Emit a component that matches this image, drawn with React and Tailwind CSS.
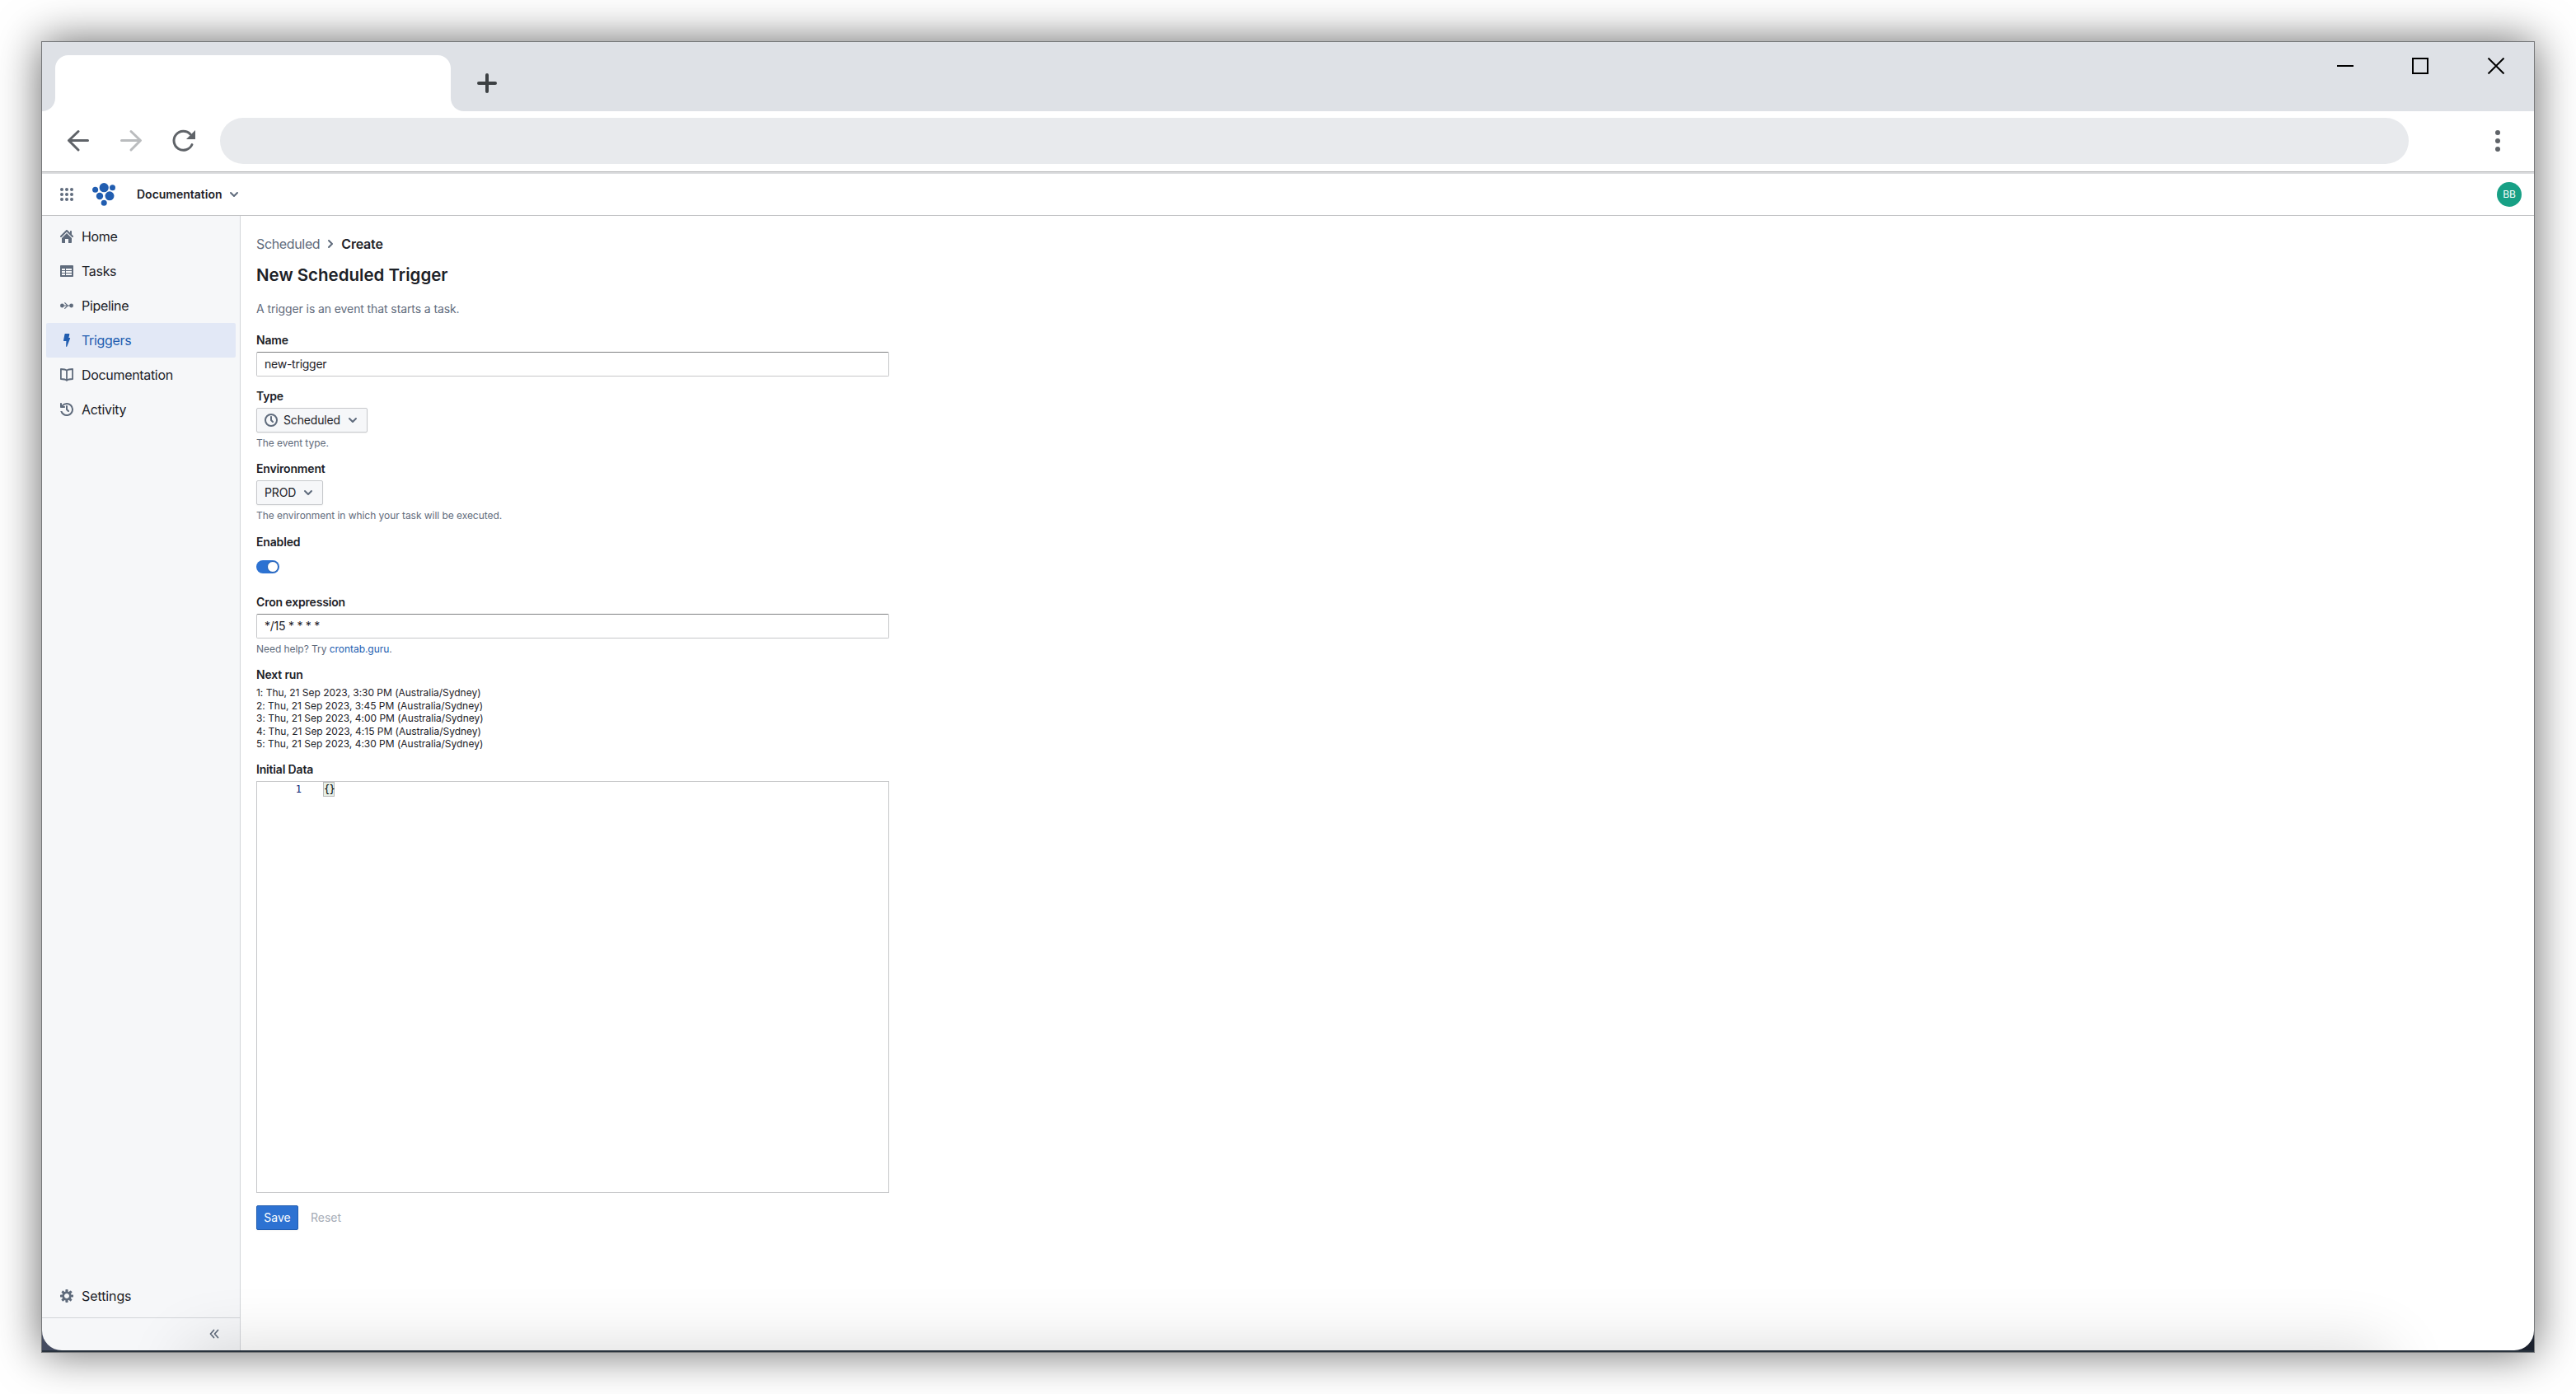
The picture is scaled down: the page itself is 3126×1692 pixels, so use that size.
import React, { useState } from "react";

const menuItems = [
  { id: "home", label: "Home" },
  { id: "tasks", label: "Tasks" },
  { id: "pipeline", label: "Pipeline" },
  { id: "triggers", label: "Triggers" },
  { id: "documentation", label: "Documentation" },
  { id: "activity", label: "Activity" },
];

const nextRuns = [
  "1: Thu, 21 Sep 2023, 3:30 PM (Australia/Sydney)",
  "2: Thu, 21 Sep 2023, 3:45 PM (Australia/Sydney)",
  "3: Thu, 21 Sep 2023, 4:00 PM (Australia/Sydney)",
  "4: Thu, 21 Sep 2023, 4:15 PM (Australia/Sydney)",
  "5: Thu, 21 Sep 2023, 4:30 PM (Australia/Sydney)",
];

const iconPaths = {
  home: "M2 10v5c0 .55.45 1 1 1h3v-5h4v5h3c.55 0 1-.45 1-1v-5L8 4l-6 6zm13.71-2.71L14 5.59V2c0-.55-.45-1-1-1s-1 .45-1 1v1.59L8.71.29C8.53.11 8.28 0 8 0s-.53.11-.71.29l-7 7a1.003 1.003 0 001.42 1.42L8 2.41l6.29 6.29c.18.18.43.3.71.3a1.003 1.003 0 00.71-1.71z",
  tasks:
    "M15 1H1c-.6 0-1 .5-1 1v12c0 .6.4 1 1 1h14c.6 0 1-.4 1-1V2c0-.5-.4-1-1-1zM6 13H2v-2h4v2zm0-3H2V8h4v2zm0-3H2V5h4v2zm8 6H7v-2h7v2zm0-3H7V8h7v2zm0-3H7V5h7v2z",
  triggers: "M6.2 0h4.6c.4 0 .6.3.5.7L10.4 5H11.6c.4 0 .6.3.5.7L8.3 15.5C8 16.2 7.1 16.1 7.1 15.3L7.4 9H4.5c-.4 0-.6-.3-.5-.7L5.5.6C5.6.2 5.8 0 6.2 0z",
  activity:
    "M8 3c-.55 0-1 .45-1 1v4c0 .28.11.53.29.71l2 2a1.003 1.003 0 001.42-1.42L9 7.59V4c0-.55-.45-1-1-1zm0-3a7.95 7.95 0 00-6 2.74V1c0-.55-.45-1-1-1s-1 .45-1 1v4c0 .55.45 1 1 1h4c.55 0 1-.45 1-1s-.45-1-1-1H3.54C4.64 2.78 6.23 2 8 2c3.31 0 6 2.69 6 6 0 3.31-2.69 6-6 6-2.61 0-4.83-1.67-5.65-4H.26A8 8 0 108 0z",
  settings:
    "M15.19 6.39h-1.85c-.11-.37-.27-.71-.45-1.04l1.36-1.36c.31-.31.31-.82 0-1.13l-1.13-1.13a.803.803 0 00-1.13 0l-1.36 1.36c-.33-.17-.67-.33-1.04-.44V.79c0-.44-.36-.8-.8-.8h-1.6c-.44 0-.8.36-.8.8v1.86c-.39.12-.75.28-1.1.47l-1.3-1.3c-.3-.3-.79-.3-1.09 0L1.82 2.91c-.3.3-.3.79 0 1.09l1.3 1.3c-.2.34-.36.7-.48 1.09H.79c-.44 0-.8.36-.8.8v1.6c0 .44.36.8.8.8h1.85c.11.37.27.71.45 1.04l-1.36 1.36c-.31.31-.31.82 0 1.13l1.13 1.13c.31.31.82.31 1.13 0l1.36-1.36c.33.18.67.33 1.04.44v1.86c0 .44.36.8.8.8h1.6c.44 0 .8-.36.8-.8v-1.86c.39-.12.75-.28 1.1-.47l1.3 1.3c.3.3.79.3 1.09 0l1.09-1.09c.3-.3.3-.79 0-1.09l-1.3-1.3c.19-.35.36-.71.48-1.1h1.85c.44 0 .8-.36.8-.8v-1.6a.816.816 0 00-.81-.79zm-7.2 4.6c-1.66 0-3-1.34-3-3s1.34-3 3-3 3 1.34 3 3-1.34 3-3 3z",
  time: "M8 0a8 8 0 100 16A8 8 0 008 0zm0 14A6 6 0 118 2a6 6 0 010 12zM9 7.59V4c0-.55-.45-1-1-1s-1 .45-1 1v4c0 .28.11.53.29.71l2 2a1.003 1.003 0 001.42-1.42L9 7.59z",
  chevronDown:
    "M12 5c-.28 0-.53.11-.71.29L8 8.59l-3.29-3.3a1.003 1.003 0 00-1.42 1.42l4 4c.18.18.43.29.71.29s.53-.11.71-.29l4-4A1.003 1.003 0 0012 5z",
  chevronRight:
    "M10.71 7.29l-4-4a1.003 1.003 0 00-1.42 1.42L8.59 8 5.3 11.29a1.003 1.003 0 001.42 1.42l4-4c.17-.18.28-.43.28-.71s-.11-.53-.29-.71z",
};

const Icon = ({ name, className = "" }) => {
  if (name === "pipeline") {
    return (
      <svg viewBox="0 0 16 16" className={`size-4 shrink-0 ${className}`} fill="none" stroke="currentColor" strokeWidth="1.2" strokeLinecap="round">
        <circle cx="2.4" cy="8" r="2.4" fill="currentColor" stroke="none" />
        <circle cx="13.6" cy="8" r="2.4" fill="currentColor" stroke="none" />
        <path d="M4 8h8M5.7 4.6L9.2 8L5.7 11.4" />
      </svg>
    );
  }
  if (name === "documentation") {
    return (
      <svg viewBox="0 0 16 16" className={`size-4 shrink-0 ${className}`} fill="none" stroke="currentColor" strokeWidth="1.8" strokeLinejoin="round">
        <path d="M8 2.8C6.5 1.2 4 1 .9 1v12c3.1 0 5.6.2 7.1 1.8C9.5 13.2 12 13 15.1 13V1C12 1 9.5 1.2 8 2.8zM8 2.8v12" />
      </svg>
    );
  }
  return (
    <svg viewBox="0 0 16 16" className={`size-4 shrink-0 ${className}`} fill="currentColor" fillRule="evenodd">
      <path d={iconPaths[name]} />
    </svg>
  );
};

const TabStrip = () => (
  <div className="flex h-[84px] shrink-0 justify-between bg-[#dee1e6]">
    <div className="flex items-end">
      {/* the tab and the curves at its foot */}
      <svg width="512" height="68" viewBox="0 0 512 68" fill="#fff">
        <path d="M0 68C9 68 16 61 16 52V16C16 7 23 0 32 0H480C489 0 496 7 496 16V52C496 61 503 68 512 68z" />
      </svg>
      <svg width="24" height="24" viewBox="0 0 24 24" className="mb-[22px] ml-4" stroke="#3c4043" strokeWidth="4" strokeLinecap="round">
        <path d="M12 2v20M2 12h20" />
      </svg>
    </div>
    <svg width="204" height="20" viewBox="0 0 204 20" className="mt-[19px] mr-9" fill="none" stroke="#000" strokeWidth="2">
      <path d="M1 10h20M93 1h18v18H93zM184.5.5l19 19M203.5.5l-19 19" />
    </svg>
  </div>
);

const Toolbar = () => (
  <div className="flex h-[73px] shrink-0 items-center bg-white pr-[41px] pb-px pl-[31px]">
    <svg width="156" height="28" viewBox="0 0 156 28" fill="none" strokeWidth="3" strokeLinecap="round" strokeLinejoin="round">
      <path d="M24.5 13.5H2M13 2.5L1.5 13.5L13 25" stroke="#5f6368" />
      <path d="M65.5 13.5H88M77 2.5L88.5 13.5L77 25" stroke="#babcbe" />
      <path d="M151 18.5A11.5 11.5 0 1 1 149 6" stroke="#5f6368" />
      <path d="M155 1v11h-11z" fill="#5f6368" />
    </svg>
    <div className="ml-[29px] h-14 flex-1 rounded-full bg-[#e8eaed]"></div>
    <div className="ml-[105px] flex flex-col gap-1">
      <span className="size-1.5 rounded-full bg-[#5f6368]"></span>
      <span className="size-1.5 rounded-full bg-[#5f6368]"></span>
      <span className="size-1.5 rounded-full bg-[#5f6368]"></span>
    </div>
  </div>
);

const Logo = () => (
  <svg width="28" height="28" viewBox="0 0 28 28" fill="#215db0">
    <circle cx="14.2" cy="5.7" r="5.6" />
    <circle cx="3.6" cy="8.2" r="3.5" />
    <circle cx="24.5" cy="5.7" r="3.5" />
    <circle cx="9" cy="16" r="4.2" />
    <circle cx="21" cy="15.8" r="5.5" />
    <circle cx="14.2" cy="24.3" r="3.5" />
  </svg>
);

const Header = () => (
  <header className="flex h-[51px] shrink-0 items-center border-b border-[#c0c1c3] bg-white pr-[15px] pl-[22px]">
    <div className="grid grid-cols-3 gap-0.5">
      {Array.from({ length: 9 }).map((_, i) => (
        <span key={i} className="size-1 rounded-full bg-[#5f6b7c]"></span>
      ))}
    </div>
    <div className="ml-[23px]">
      <Logo />
    </div>
    <span className="ml-[26px] text-sm font-semibold">Documentation</span>
    <Icon name="chevronDown" className="ml-1.5 text-[#5f6b7c]" />
    <span className="ml-auto flex size-[30px] items-center justify-center rounded-full bg-[#17a085] text-xs text-white">
      BB
    </span>
  </header>
);

const Sidebar = ({ active, onSelect }) => (
  <aside className="flex w-[241px] shrink-0 flex-col border-r border-[#d3d5d9] bg-[#f6f7f9]">
    <nav className="flex-1 px-[5px] pt-1">
      {menuItems.map((item) => (
        <button
          key={item.id}
          onClick={() => onSelect(item.id)}
          className={`flex h-[42px] w-[230px] items-center gap-2.5 rounded-xs pl-[17px] text-base tracking-[-0.32px] ${
            active === item.id ? "bg-[#e2e8f6] text-[#215db0]" : "text-[#1c2127]"
          }`}
        >
          <Icon name={item.id} className={active === item.id ? "text-[#215db0]" : "text-[#5f6b7c]"} />
          {item.label}
        </button>
      ))}
    </nav>
    <button className="mb-[5px] flex h-[42px] items-center gap-2.5 pl-[22px] text-base tracking-[-0.1px]">
      <Icon name="settings" className="text-[#5f6b7c]" />
      Settings
    </button>
    <div className="flex h-10 items-center justify-end border-t border-[#d3d5d9] pr-[25px] pb-px">
      <svg width="12" height="12" viewBox="0 0 12 12" fill="none" stroke="#5f6b7c" strokeWidth="1.7" strokeLinecap="round" strokeLinejoin="round">
        <path d="M5.5 1.5L1.5 6L5.5 10.5M10.5 1.5L6.5 6L10.5 10.5" />
      </svg>
    </div>
  </aside>
);

const Field = ({ label, help, className = "", children }) => (
  <div className={`flex flex-col items-start ${className}`}>
    <label className="mb-[5px] h-[18px] text-sm leading-[18px] font-semibold tracking-[-0.17px]">{label}</label>
    {children}
    {help && <div className="mt-[5px] h-4 text-xs leading-4 tracking-[-0.05px] text-[#5f6b7c]">{help}</div>}
  </div>
);

const TextInput = ({ value, onChange }) => (
  <input
    value={value}
    onChange={(e) => onChange(e.target.value)}
    className="h-[30px] w-[768px] rounded-xs border border-[#c6c7c9] border-t-[#808183] px-[9px] pb-px text-sm tracking-[-0.25px] text-[#1c2127] outline-none"
  />
);

const SelectButton = ({ icon, children }) => (
  <button className="flex h-[30px] items-center rounded-xs border border-[#c6c8cb] bg-[#f6f7f9] px-[9px] text-sm tracking-[-0.15px] shadow-xs">
    {icon && <Icon name={icon} className="mr-[7px] text-[#5f6b7c]" />}
    {children}
    <Icon name="chevronDown" className="ml-[7px] text-[#5f6b7c]" />
  </button>
);

const TriggerForm = () => {
  const [name, setName] = useState("new-trigger");
  const [cron, setCron] = useState("*/15 * * * *");
  const [enabled, setEnabled] = useState(true);

  return (
    <main className="flex-1 bg-white pt-[23px] pl-[19px]">
      <div className="flex h-[22px] items-center text-base">
        <span className="tracking-[-0.35px] text-[#5f6b7c]">Scheduled</span>
        <Icon name="chevronRight" className="mx-[5px] text-[#5f6b7c]" />
        <span className="font-semibold tracking-[-0.2px]">Create</span>
      </div>
      <h1 className="mt-[15px] h-6 text-[20.5px] leading-6 font-semibold">New Scheduled Trigger</h1>
      <p className="mt-[19px] h-5 text-sm leading-5 tracking-[-0.1px] text-[#5f6b7c]">A trigger is an event that starts a task.</p>

      <Field label="Name" className="mt-[19px]">
        <TextInput value={name} onChange={setName} />
      </Field>
      <Field label="Type" help="The event type." className="mt-[15px]">
        <SelectButton icon="time">Scheduled</SelectButton>
      </Field>
      <Field label="Environment" help="The environment in which your task will be executed." className="mt-3.5">
        <SelectButton>PROD</SelectButton>
      </Field>
      <Field label="Enabled" className="mt-[15px]">
        <button
          onClick={() => setEnabled(!enabled)}
          className={`mt-2 flex h-4 w-7 items-center rounded-full px-px ${enabled ? "justify-end bg-[#2d72d2]" : "bg-gray-400"}`}
        >
          <span className="size-3.5 rounded-full border border-[#215db0] bg-white"></span>
        </button>
      </Field>
      <Field
        label="Cron expression"
        className="mt-[26px]"
        help={
          <>
            Need help? Try <a className="text-[#215db0]">crontab.guru</a>.
          </>
        }
      >
        <TextInput value={cron} onChange={setCron} />
      </Field>
      <Field label="Next run" className="mt-3.5">
        <div className="pt-[0.4px] text-xs leading-[15.43px] tracking-[-0.02px]">
          {nextRuns.map((run) => (
            <div key={run}>{run}</div>
          ))}
        </div>
      </Field>
      <Field label="Initial Data" className="mt-[14.5px]">
        <div className="flex h-[500px] w-[768px] border border-[#c6c7c9] font-['DejaVu_Sans_Mono',monospace] text-xs leading-[18px]">
          <span className="w-[54px] text-right text-[#0b216f]">1</span>
          <span className="ml-[26px] h-[18px] w-[14px] border border-[#b9b9b9] bg-[#e7efe6] leading-4 tracking-[-0.6px] text-black">{"{}"}</span>
        </div>
      </Field>
      <div className="mt-[15px] flex items-center text-sm">
        <button className="h-[30px] w-[51px] rounded-xs border border-[#215db0] bg-[#2d72d2] text-white shadow-xs">Save</button>
        <button className="ml-[15px] text-[#a5abb5]">Reset</button>
      </div>
    </main>
  );
};

const App = () => {
  const [active, setActive] = useState("triggers");

  return (
    <div className="h-[1692px] w-[3126px] overflow-hidden bg-white p-[50px] font-[Inter,sans-serif] text-[#1c2127]">
      <div className="flex h-full flex-col border border-[#76787a] bg-gradient-to-r from-[#454c61] to-[#1b202d] shadow-[0_0_50px_rgba(0,0,0,0.6)]">
        <TabStrip />
        <Toolbar />
        <div className="relative flex flex-1 flex-col overflow-hidden rounded-b-[24px] border-t border-[#b4b5b7]">
          <div className="h-0.5 shrink-0 bg-[#dcdddf]"></div>
          <Header />
          <div className="flex flex-1">
            <Sidebar active={active} onSelect={setActive} />
            <TriggerForm />
          </div>
          {/* soft shade along the foot of the window */}
          <div className="pointer-events-none absolute right-[180px] -bottom-20 left-[180px] h-20 shadow-[0_0_80px_rgba(0,0,0,0.16)]"></div>
        </div>
        <div className="h-0.5 shrink-0 bg-[#28323d]"></div>
      </div>
    </div>
  );
};

export default App;
